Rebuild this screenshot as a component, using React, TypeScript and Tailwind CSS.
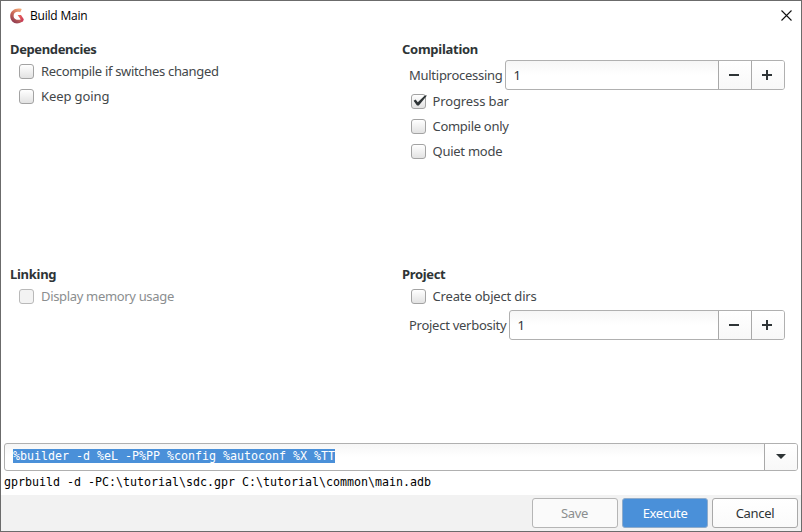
import React from "react";

type CheckProps = { label: string; checked?: boolean; disabled?: boolean; spacing?: string };

function Check({ label, checked = false, disabled = false, spacing = "" }: CheckProps) {
  return (
    <label className="flex h-[25px] items-center pl-[9px]">
      <span
        className={`flex h-[15px] w-[15px] shrink-0 rounded-[3px] border ${
          disabled ? "border-[#b9b9b9] bg-[#f3f3f3]" : "border-[#a3a3a3] bg-linear-to-b from-white to-[#e2e2e2]"
        }`}
      >
        {checked && (
          <svg className="-mt-px h-[14px] w-[15px] shrink-0 overflow-visible" viewBox="0 0 15 14">
            <path d="M1.6 6.8 L3.6 5.6 L5.8 8.2 L12.8 1.4 L15 1.6 L6.8 11.4 L5 11.4 Z" fill="#2e3436" />
          </svg>
        )}
      </span>
      <span className={`ml-[7px] pb-[2px] whitespace-nowrap ${spacing} ${disabled ? "text-[#8b8e8f]" : ""}`}>{label}</span>
    </label>
  );
}

function Heading({ children, spacing }: { children: React.ReactNode; spacing: string }) {
  return <h2 className={`h-[22px] text-[13px] leading-[22px] font-bold text-[#2e3436] ${spacing}`}>{children}</h2>;
}

function Spin({ label, labelWidth }: { label: string; labelWidth: string }) {
  return (
    <div className="flex h-[30px] w-[383px] items-center">
      <span className={`ml-[7px] shrink-0 pl-[0.5px] tracking-[-0.27px] whitespace-nowrap ${labelWidth}`}>{label}</span>
      <div className="flex h-[30px] flex-1 rounded-[3px] border border-[#b0b0b0] bg-linear-to-b from-[#f6f6f6] to-white to-50%">
        <span className="flex-1 pl-2 leading-[29px] text-[#2e3436]">1</span>
        <button className="flex w-[33px] items-center justify-center border-l border-[#a9a9a9] bg-linear-to-b from-white to-[#f8f8f8] pr-[2px]">
          <span className="h-[2px] w-[10px] bg-[#2e3436]" />
        </button>
        <button className="flex w-[33px] items-center justify-center rounded-r-[2px] border-l border-[#a9a9a9] bg-linear-to-b from-white to-[#f8f8f8] pr-[2px]">
          <svg className="h-[10px] w-[10px]" viewBox="0 0 10 10" fill="#2e3436">
            <path d="M4 0h2v4h4v2H6v4H4V6H0V4h4z" />
          </svg>
        </button>
      </div>
    </div>
  );
}

function Logo() {
  return (
    <svg className="h-[16px] w-[16px]" viewBox="0 0 16 16">
      <defs>
        <linearGradient id="ring" x1="0.8" y1="0" x2="0.2" y2="1">
          <stop offset="0" stopColor="#f4ad7c" />
          <stop offset="0.45" stopColor="#cf6c58" />
          <stop offset="1" stopColor="#853350" />
        </linearGradient>
        <linearGradient id="hook" x1="0" y1="0" x2="1" y2="1">
          <stop offset="0" stopColor="#f26a58" />
          <stop offset="1" stopColor="#c03058" />
        </linearGradient>
      </defs>
      <path
        d="M12.8 0.9C6.5-.9 1.2 2.6 1.2 8c0 5 4 8 8.2 7.3 1.8-.3 3.2-1 4-2l-1.8-2C9.6 12.5 4.8 11.8 4.6 8.2 4.4 4.4 7.8 3 11.2 4.2Z"
        fill="url(#ring)"
      />
      <path d="M8.6 7h3.4l2.8 4.2-.8 2.4-1.6.4-1.1-1.2.5-1.2Z" fill="url(#hook)" />
    </svg>
  );
}

export default function App() {
  return (
    <main className="flex h-[532px] w-[802px] flex-col border border-[#6b6b6b] bg-white font-['Noto_Sans',sans-serif] text-[13px] leading-[18px] text-[#43474a]">
      <header className="flex h-[37px] items-start justify-between pt-[6px] pr-[9px] pl-[8px]">
        <div className="flex items-center">
          <Logo />
          <span className="ml-[5px] font-['Open_Sans',sans-serif] text-[12px] leading-[18px] tracking-[-0.2px] text-black">
            Build Main
          </span>
        </div>
        <svg className="mt-[3px] h-[11px] w-[11px]" viewBox="0 0 11 11" stroke="#111" strokeWidth="1.1">
          <path d="M.5.5l10 10M10.5.5l-10 10" />
        </svg>
      </header>

      <div className="grid h-[405px] grid-cols-[391.5px_1fr] grid-rows-[225px_180px] pl-[9px]">
        <section>
          <Heading spacing="tracking-[-0.38px]">Dependencies</Heading>
          <div className="-mt-px">
            <Check label="Recompile if switches changed" spacing="tracking-[-0.32px]" />
            <Check label="Keep going" spacing="tracking-[-0.1px]" />
          </div>
        </section>
        <section>
          <Heading spacing="pl-[0.5px] tracking-[-0.27px]">Compilation</Heading>
          <Spin label="Multiprocessing" labelWidth="w-[96px]" />
          <div className="-mt-px">
            <Check label="Progress bar" checked spacing="tracking-[-0.12px]" />
            <Check label="Compile only" spacing="tracking-[-0.29px]" />
            <Check label="Quiet mode" spacing="tracking-[-0.25px]" />
          </div>
        </section>
        <section>
          <Heading spacing="tracking-[-0.28px]">Linking</Heading>
          <div className="-mt-px">
            <Check label="Display memory usage" disabled spacing="tracking-[-0.33px]" />
          </div>
        </section>
        <section>
          <Heading spacing="pl-[0.5px] tracking-[-0.35px]">Project</Heading>
          <div className="-mt-px">
            <Check label="Create object dirs" spacing="tracking-[-0.17px]" />
          </div>
          <div className="mt-px">
            <Spin label="Project verbosity" labelWidth="w-[100px]" />
          </div>
        </section>
      </div>

      <div className="flex h-[52px] flex-col pr-[3px] pl-[3px] font-['DejaVu_Sans_Mono',monospace] text-[11.63px]">
        <div className="flex h-[28px] shrink-0 rounded-[3px] border border-[#b0b0b0] bg-linear-to-b from-[#f6f6f6] to-white to-50%">
          <div className="flex flex-1 items-start pt-[5px] pl-2">
            <span className="h-[14px] bg-[#4a90d9] leading-[14px] whitespace-pre text-white">
              %builder -d %eL -P%PP %config %autoconf %X %TT
            </span>
          </div>
          <button className="flex w-[33px] items-center justify-center rounded-r-[2px] border-l border-[#a9a9a9] bg-linear-to-b from-white to-[#f8f8f8]">
            <svg className="-mt-px h-[5px] w-[10px]" viewBox="0 0 10 5">
              <path d="M0 0h10L5 5z" fill="#2e3436" />
            </svg>
          </button>
        </div>
        <p className="leading-[22px] whitespace-pre text-black">
          {"gprbuild -d -PC:\\tutorial\\sdc.gpr C:\\tutorial\\common\\main.adb"}
        </p>
      </div>

      <footer className="flex flex-1 items-start justify-end gap-[4px] bg-[#f2f2f2] pt-[3px] pr-[3px]">
        <button className="h-[30px] w-[86px] rounded-[3px] border border-[#b5b5b5] bg-[#fafafa] pr-px tracking-[-0.4px] text-[#8b8e8f]">Save</button>
        <button className="h-[30px] w-[86px] rounded-[3px] border border-[#8faccb] bg-[#4a90d9] tracking-[-0.4px] text-white">Execute</button>
        <button className="h-[30px] w-[86px] rounded-[3px] border border-[#a9a9a9] bg-linear-to-b from-white to-[#fafafa] tracking-[-0.3px] text-[#2e3436]">
          Cancel
        </button>
      </footer>
    </main>
  );
}
